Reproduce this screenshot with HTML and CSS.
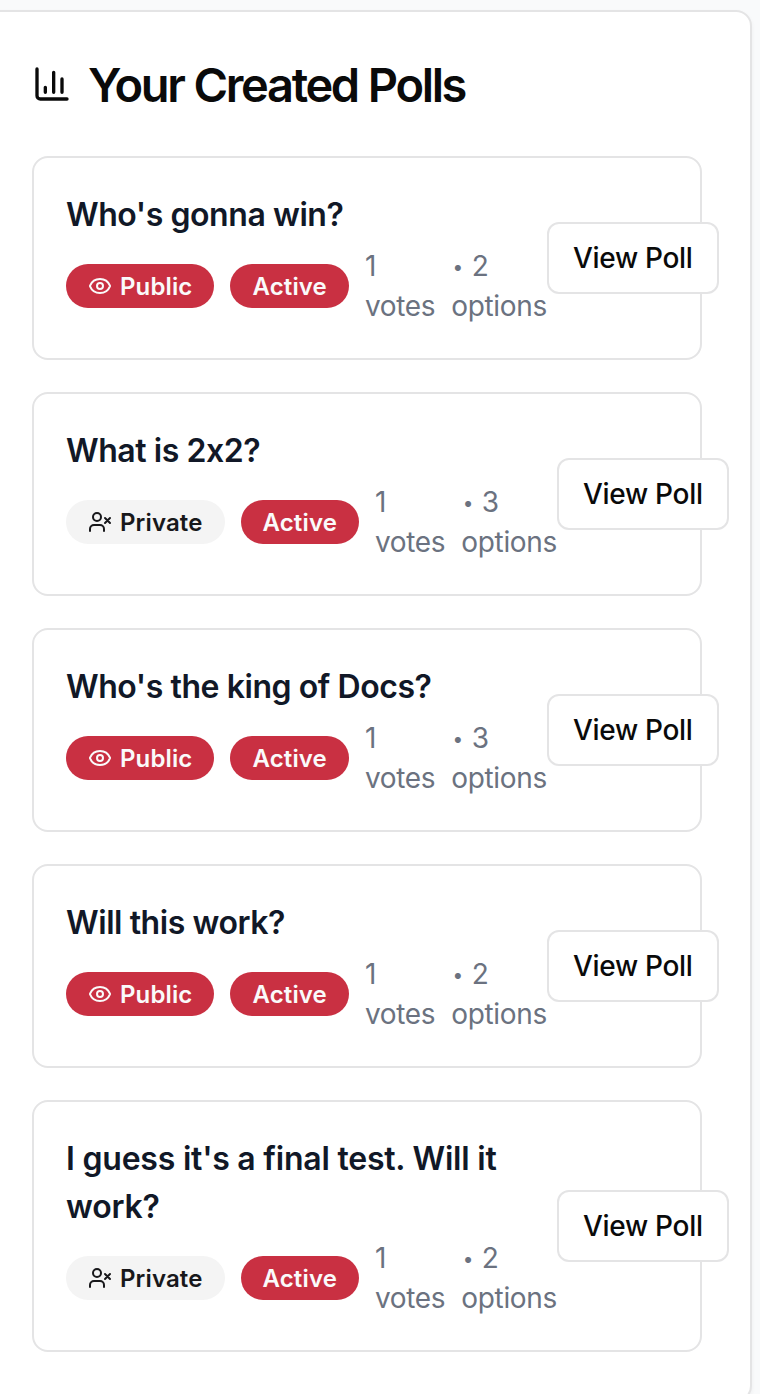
FILE: index.html
```html
<!DOCTYPE html>
<html lang="en">
<head>
<meta charset="utf-8">
<title>Your Created Polls</title>
<link rel="stylesheet" href="styles.css">
</head>
<body>
<svg class="sprite" xmlns="http://www.w3.org/2000/svg">
  <symbol id="eye" viewBox="0 0 24 24"><path d="M2.062 12.348a1 1 0 0 1 0-.696 10.75 10.75 0 0 1 19.876 0 1 1 0 0 1 0 .696 10.75 10.75 0 0 1-19.876 0"/><circle cx="12" cy="12" r="3"/></symbol>
  <symbol id="user-x" viewBox="0 0 24 24"><path d="M16 21v-2a4 4 0 0 0-4-4H6a4 4 0 0 0-4 4v2"/><circle cx="9" cy="7" r="4"/><path d="m17 8 5 5M22 8l-5 5"/></symbol>
</svg>
<main class="panel">
  <h1 class="panel-title">
    <svg class="icon title-icon" viewBox="0 0 24 24"><path d="M3 3v16a2 2 0 0 0 2 2h16"/><path d="M18 17V9M13 17V5M8 17v-3"/></svg>
    <span class="title-text">Your Created Polls</span>
  </h1>
  <div class="polls">
    <article class="poll">
      <div class="info">
        <h2 class="question">Who's gonna win?</h2>
        <div class="meta">
          <span class="badge"><svg class="icon badge-icon"><use href="#eye"/></svg>Public</span>
          <span class="badge">Active</span>
          <span class="count">1 votes</span>
          <span class="count"><span class="dot">•</span> 2 options</span>
        </div>
      </div>
      <button class="view">View Poll</button>
    </article>
    <article class="poll">
      <div class="info">
        <h2 class="question">What is 2x2?</h2>
        <div class="meta">
          <span class="badge muted"><svg class="icon badge-icon"><use href="#user-x"/></svg>Private</span>
          <span class="badge">Active</span>
          <span class="count">1 votes</span>
          <span class="count"><span class="dot">•</span> 3 options</span>
        </div>
      </div>
      <button class="view">View Poll</button>
    </article>
    <article class="poll">
      <div class="info">
        <h2 class="question">Who's the king of Docs?</h2>
        <div class="meta">
          <span class="badge"><svg class="icon badge-icon"><use href="#eye"/></svg>Public</span>
          <span class="badge">Active</span>
          <span class="count">1 votes</span>
          <span class="count"><span class="dot">•</span> 3 options</span>
        </div>
      </div>
      <button class="view">View Poll</button>
    </article>
    <article class="poll">
      <div class="info">
        <h2 class="question">Will this work?</h2>
        <div class="meta">
          <span class="badge"><svg class="icon badge-icon"><use href="#eye"/></svg>Public</span>
          <span class="badge">Active</span>
          <span class="count">1 votes</span>
          <span class="count"><span class="dot">•</span> 2 options</span>
        </div>
      </div>
      <button class="view">View Poll</button>
    </article>
    <article class="poll">
      <div class="info">
        <h2 class="question long">I guess it's a final test. Will it work?</h2>
        <div class="meta">
          <span class="badge muted"><svg class="icon badge-icon"><use href="#user-x"/></svg>Private</span>
          <span class="badge">Active</span>
          <span class="count">1 votes</span>
          <span class="count"><span class="dot">•</span> 2 options</span>
        </div>
      </div>
      <button class="view">View Poll</button>
    </article>
  </div>
</main>
</body>
</html>
```

FILE: styles.css
```css
* { box-sizing: border-box; margin: 0; }

body {
  height: 1394px;
  padding-top: 10px;
  overflow: hidden;
  background: #f9fafb;
  font-family: Inter, sans-serif;
  font-feature-settings: "calt" 0;
  color: #0a0a0a;
}

.sprite { display: none; }

.icon {
  flex-shrink: 0;
  fill: none;
  stroke: currentColor;
  stroke-width: 2;
  stroke-linecap: round;
  stroke-linejoin: round;
}

.panel {
  width: 770px;
  margin-left: -18px;
  padding: 48px;
  border: 2px solid #e4e4e5;
  border-radius: 16px;
  background: #fff;
  box-shadow: 0 2px 4px rgba(0, 0, 0, 0.05);
}

.panel-title {
  display: flex;
  align-items: center;
  gap: 16px;
  height: 48px;
  margin-bottom: 48px;
  font-size: 47px;
  font-weight: 600;
  line-height: 48px;
  letter-spacing: -2.35px;
  word-spacing: 0.5px;
  white-space: nowrap;
}

.title-icon { width: 40px; height: 40px; }

.title-text { padding-top: 2px; }

.polls { display: flex; flex-direction: column; gap: 32px; }

.poll {
  display: flex;
  align-items: center;
  justify-content: space-between;
  padding: 32px;
  border: 2px solid #e4e4e5;
  border-radius: 16px;
}

.question {
  padding-top: 1px;
  font-size: 32px;
  font-weight: 600;
  line-height: 48px;
  letter-spacing: -0.43px;
  color: #111827;
}

.question.long { letter-spacing: -0.22px; }

.meta {
  display: flex;
  align-items: center;
  gap: 16px;
  margin-top: 7px;
}

.badge {
  display: inline-flex;
  align-items: center;
  padding: 5px 20px 3px;
  border: 2px solid transparent;
  border-radius: 22px;
  background: #c93042;
  color: #fafafa;
  font-size: 24px;
  font-weight: 600;
  line-height: 32px;
  letter-spacing: 0.13px;
}

.badge.muted { background: #f4f4f4; color: #18181b; }

.badge-icon { width: 24px; height: 24px; margin: -2px 8px 0 0; }

.count {
  font-size: 28px;
  line-height: 40px;
  letter-spacing: -0.33px;
  color: #6b7280;
}

.dot {
  display: inline-block;
  width: 13px;
  font-size: 19px;
  line-height: 20px;
  text-align: center;
  vertical-align: 2px;
}

.view {
  flex-shrink: 0;
  height: 72px;
  padding: 0 24px;
  border: 2px solid #e4e4e5;
  border-radius: 12px;
  background: #fff;
  color: #0a0a0a;
  font: 500 28px/40px Inter, sans-serif;
  letter-spacing: -0.3px;
  white-space: nowrap;
}
```
